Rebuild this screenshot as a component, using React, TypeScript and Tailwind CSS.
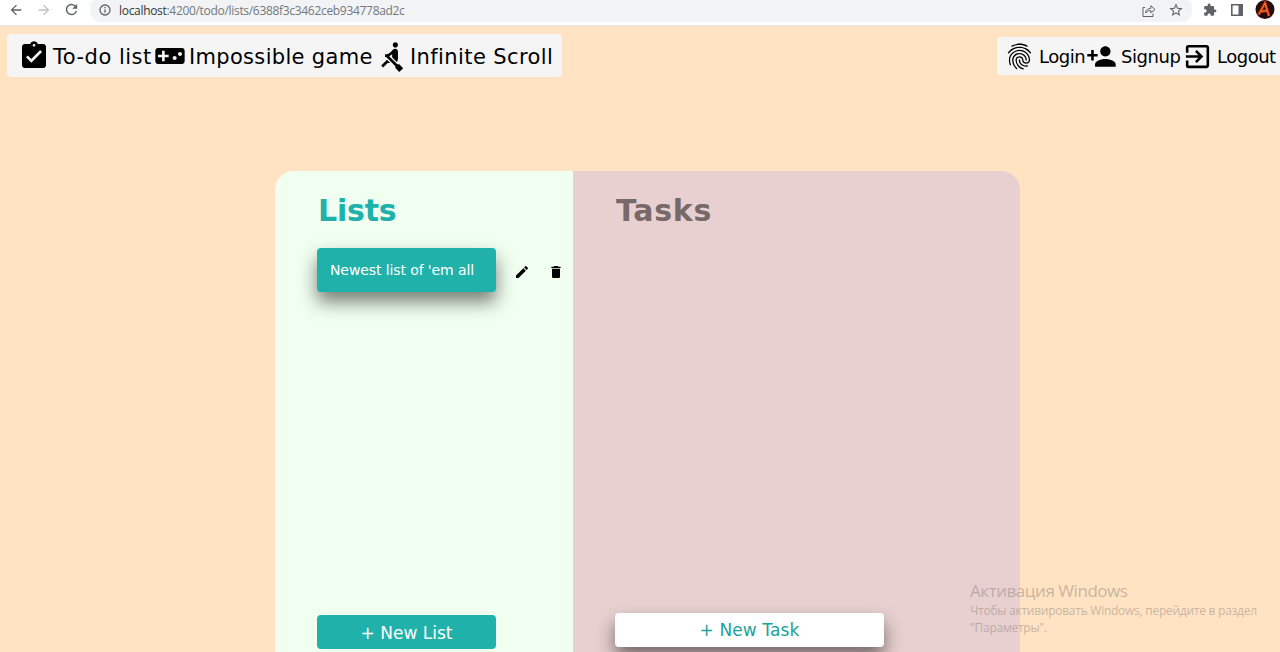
import React from "react";
import {
  MdArrowBack, MdArrowForward, MdAssignmentTurnedIn, MdDelete, MdEdit, MdExitToApp, MdExtension,
  MdFingerprint, MdPersonAdd, MdRefresh, MdRowing, MdStarBorder, MdVideogameAsset,
} from "react-icons/md";

function BrowserBar() {
  return (
    <header className="flex h-[26px] w-full shrink-0 items-start border-b border-[#e6e6e8] bg-white text-[#5f6368]">
      <MdArrowBack className="ml-2 mt-0.5 size-4 shrink-0" />
      <MdArrowForward className="ml-3 mt-0.5 size-4 shrink-0 text-[#bcbec1]" />
      <MdRefresh className="ml-[11px] mt-px size-[17px] shrink-0" />
      <div className="ml-[10px] flex h-[22px] w-[1102px] shrink-0 items-center rounded-b-[11px] rounded-t-md bg-[#f1f3f4] pb-px pl-[9px]">
        <svg viewBox="0 0 12 12" className="mb-px size-3 shrink-0" fill="none" stroke="currentColor" strokeWidth="1.3">
          <circle cx="6" cy="6" r="5" />
          <path d="M6 5.2v3.500M6 3v1.300" />
        </svg>
        <span className="ml-[8px] w-[1022px] shrink-0 whitespace-nowrap font-['Open_Sans','Noto_Sans',sans-serif] text-[12px] leading-5 tracking-[-0.31px] text-[#74787c]">
          <span className="text-[#34373a]">localhost</span>:4200/todo/lists/6388f3c3462ceb934778ad2c
        </span>
        <svg viewBox="0 0 14 14" className="ml-px size-[14px] shrink-0" fill="none" stroke="currentColor" strokeWidth="1">
          <path d="M3 3.500H1v9h10V9.500M3.500 9c.5-3.400 2.500-4.600 5.300-4.600V1.700L13 5.500 8.800 8.800V6.500C6.500 6.500 5 7.100 3.500 9Z" />
        </svg>
        <MdStarBorder className="mb-px ml-3 size-4 shrink-0" />
      </div>
      <MdExtension className="ml-[11px] mt-[3px] size-[14px] shrink-0" />
      <svg viewBox="0 0 12 12" className="ml-[14px] mt-1 size-3 shrink-0">
        <path d="M.8.8h10.400v10.400H.8z" fill="none" stroke="currentColor" strokeWidth="1.600" />
        <path d="M7.500 1H11v10H7.500z" fill="currentColor" />
      </svg>
      <svg viewBox="0 0 20 20" className="ml-3 size-5 shrink-0">
        <circle cx="10" cy="9.500" r="9.500" fill="#280b0b" />
        <path d="M3.500 14.500 10 3 14 16M5.500 11.500l8-1" fill="none" stroke="#a7260d" strokeWidth="3" />
        <path d="M4 14.500 10 3 14 16M6 11.500l7-1" fill="none" stroke="#f46b25" strokeWidth="1.400" />
      </svg>
    </header>
  );
}

function Watermark() {
  return (
    <div className="absolute left-[970px] top-[580px] whitespace-nowrap font-['Open_Sans','Noto_Sans',sans-serif] text-[#8f8581]/50">
      <p className="text-[17px] leading-[22px] tracking-[-0.45px]">Активация Windows</p>
      <p className="text-[12px] leading-[17px] tracking-[-0.26px]">Чтобы активировать Windows, перейдите в раздел</p>
      <p className="text-[12px] leading-[17px] tracking-[-0.26px]">"Параметры".</p>
    </div>
  );
}

export default function App() {
  return (
    <div className="relative flex h-[652px] w-[1280px] flex-col overflow-hidden bg-[#ffe3c2] font-['Verdana','DejaVu_Sans',sans-serif] text-black">
      <BrowserBar />
      <nav className="flex h-[145px] shrink-0 items-start justify-between">
        <div className="ml-[7px] mt-2 flex h-[43px] w-[555px] items-center rounded bg-[#f5f5f5] pl-[11px] pt-px text-[21px]">
          <MdAssignmentTurnedIn className="size-8 shrink-0" />
          <span className="ml-[3px] w-[101px] shrink-0 whitespace-nowrap pt-[3px] tracking-[0.5px]">To-do list</span>
          <MdVideogameAsset className="size-8 shrink-0" />
          <span className="ml-[3px] w-[187px] shrink-0 whitespace-nowrap pt-[3px] tracking-[0.32px]">Impossible game</span>
          <MdRowing className="size-[31px] shrink-0" />
          <span className="ml-[3px] shrink-0 whitespace-nowrap pt-[3px] tracking-[0.4px]">Infinite Scroll</span>
        </div>
        <div className="mt-[11px] flex h-[38px] w-[283px] items-center rounded-l bg-[#f5f5f5] pl-[7px] text-[18px]">
          <MdFingerprint className="size-[31px] shrink-0" />
          <span className="ml-[4px] w-[47px] shrink-0 whitespace-nowrap pt-px tracking-[-0.5px]">Login</span>
          <MdPersonAdd className="size-[31px] shrink-0" />
          <span className="ml-[4px] w-[61px] shrink-0 whitespace-nowrap pt-px tracking-[-0.45px]">Signup</span>
          <MdExitToApp className="size-[31px] shrink-0" />
          <span className="ml-[4px] shrink-0 whitespace-nowrap pt-px tracking-[-0.5px]">Logout</span>
        </div>
      </nav>
      <main className="ml-[275px] flex h-[481px] w-[745px] overflow-hidden rounded-t-[19px]">
        <aside className="flex w-[298px] shrink-0 flex-col bg-[#f0fff0] pl-[42px]">
          <h1 className="ml-px mt-5 h-[39px] text-[30px] font-bold leading-10 tracking-[-0.2px] text-[#20b2aa]">Lists</h1>
          <div className="mt-[18px] flex items-center">
            <div className="flex h-[44px] w-[179px] shrink-0 items-center rounded bg-[#20b2aa] pl-[13px] pt-px text-[14px] tracking-[-0.1px] text-white shadow-[0_10px_18px_rgba(0,0,0,0.5)]">
              <span className="whitespace-nowrap">Newest list of 'em all</span>
            </div>
            <MdEdit className="ml-[18px] mt-1 size-4" />
            <MdDelete className="ml-[18px] mt-1 size-4" />
          </div>
          <button className="mt-[323px] h-[34px] w-[179px] shrink-0 rounded bg-[#20b2aa] pt-[3px] text-[17px] text-white">+ New List</button>
        </aside>
        <section className="flex grow flex-col bg-[#e8d0d0] pl-[42px]">
          <h1 className="ml-px mt-5 h-10 text-[30px] font-bold leading-10 tracking-[0.7px] text-[#786969]">Tasks</h1>
          <button className="mt-[382px] h-[34px] w-[269px] shrink-0 rounded bg-white pt-0.5 text-[17px] tracking-[0.1px] text-[#20a29a] shadow-[0_10px_18px_rgba(0,0,0,0.5)]">+ New Task</button>
        </section>
      </main>
      <Watermark />
    </div>
  );
}
